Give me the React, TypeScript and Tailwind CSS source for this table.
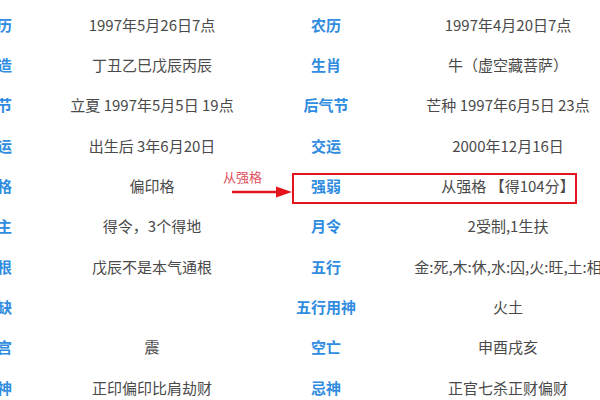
import React from 'react'

const rows: [string, string, string, string][] = [
  ['公历', '1997年5月26日7点', '农历', '1997年4月20日7点'],
  ['乾造', '丁丑乙巳戊辰丙辰', '生肖', '牛（虚空藏菩萨）'],
  ['交节', '立夏 1997年5月5日 19点', '后气节', '芒种 1997年6月5日 23点'],
  ['起运', '出生后 3年6月20日', '交运', '2000年12月16日'],
  ['命格', '偏印格', '强弱', '从强格 【得104分】'],
  ['日主', '得令，3个得地', '月令', '2受制,1生扶'],
  ['通根', '戊辰不是本气通根', '五行', '金:死,木:休,水:囚,火:旺,土:相'],
  ['五缺', '', '五行用神', '火土'],
  ['命宫', '震', '空亡', '申酉戌亥'],
  ['喜神', '正印偏印比肩劫财', '忌神', '正官七杀正财偏财'],
]

export default function App() {
  return (
    <div className="relative w-[600px] h-[400px] overflow-hidden bg-white font-['Noto_Sans_CJK_SC',sans-serif]">
      <div className="-ml-[56px] pt-[5px] grid grid-cols-[70px_276px_72px_292px]">
        {rows.map((r, i) => (
          <React.Fragment key={i}>
            <div className="h-[40.3px] pr-[2px] flex items-center justify-end whitespace-nowrap text-[15px] font-bold text-[#2f8ce0]">{r[0]}</div>
            <div className="h-[40.3px] flex items-center justify-center whitespace-nowrap text-[15px] text-[#4a4a4a]">{r[1]}</div>
            <div className="h-[40.3px] flex items-center justify-center whitespace-nowrap text-[15px] font-bold text-[#2f8ce0]">{r[2]}</div>
            <div className="h-[40.3px] flex items-center justify-center whitespace-nowrap text-[15px] text-[#4a4a4a]">{r[3]}</div>
          </React.Fragment>
        ))}
      </div>

      {/* annotation */}
      <div className="absolute left-[292px] top-[173px] w-[285px] h-[31px] border-2 border-[#e3141d]" />
      <span className="absolute left-[223px] top-[170px] text-[13px] leading-none text-[#e2505c]">从强格</span>
      <svg className="absolute left-[230px] top-[185px]" width="64" height="14" viewBox="0 0 64 14">
        <line x1="2" y1="7" x2="48" y2="7" stroke="#e3141d" strokeWidth="2.5" />
        <polygon points="46,1.5 62,7 46,12.5" fill="#e3141d" />
      </svg>
    </div>
  )
}
